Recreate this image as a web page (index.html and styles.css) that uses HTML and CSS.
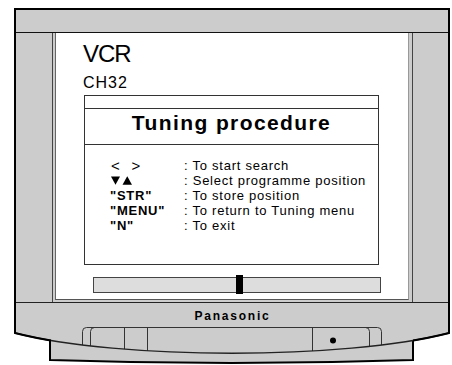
FILE: index.html
```html
<!DOCTYPE html>
<html>
<head>
<title>Tuning procedure</title>
<link rel="stylesheet" href="styles.css">
</head>
<body>

<div class="tv">
  <div class="cabinet">
    <div class="band"></div>
    <div class="front">
      <div class="frame">
        <div class="screen">
          <div class="vcr">VCR</div>
          <div class="channel">CH32</div>

          <div class="panel">
            <div class="panel-top"></div>
            <div class="title">Tuning procedure</div>
            <div class="keys">
              <div class="key plain">&lt;<span class="gt">&gt;</span></div>
              <div class="desc">: To start search</div>

              <div class="key">
                <svg class="arrows" width="24" height="9" viewBox="0 0 24 9">
                  <polygon points="1,0.5 10,0.5 5.5,8.8"/>
                  <polygon points="12.5,8.8 22,8.8 17.25,0.3"/>
                </svg>
              </div>
              <div class="desc">: Select programme position</div>

              <div class="key">"STR"</div>
              <div class="desc">: To store position</div>

              <div class="key">"MENU"</div>
              <div class="desc">: To return to Tuning menu</div>

              <div class="key">"N"</div>
              <div class="desc">: To exit</div>
            </div>
          </div>

          <div class="bar"><div class="marker"></div></div>
        </div>
      </div>
    </div>
  </div>

  <svg class="base" width="436" height="62" viewBox="14 303 436 62">
    <defs>
      <clipPath id="face">
        <path d="M15,300 L15,333 C120,360 344,360 449,333 L449,300 Z"/>
      </clipPath>
      <clipPath id="sides">
        <rect x="0" y="300" width="51" height="70"/>
        <rect x="413" y="300" width="50" height="70"/>
      </clipPath>
    </defs>

    <!-- stand under the bezel -->
    <path class="stand" d="M50,336 L50,360 Q231.5,366 413,360 L413,336 Z"/>

    <!-- bezel -->
    <path class="face" d="M15,302 L15,333 C120,360 344,360 449,333 L449,302 Z"/>

    <g clip-path="url(#face)" class="panel-lines">
      <path d="M82.5,360 L82.5,331.5 Q82.5,327.5 86.5,327.5 L377.5,327.5 Q381.5,327.5 381.5,331.5 L381.5,360"/>
      <path d="M90.5,360 L90.5,331.5 Q90.5,327.5 94.5,327.5"/>
      <path d="M369.5,360 L369.5,331.5 Q369.5,327.5 365.5,327.5"/>
      <path d="M124.5,327.5 V360 M147.5,327.5 V360 M312.5,327.5 V360"/>
    </g>

    <path class="rim" d="M15,302 L15,333 C120,360 344,360 449,333 L449,302"/>
    <path class="rim-outer" clip-path="url(#sides)" d="M15,302 L15,333 C120,360 344,360 449,333 L449,302"/>

    <text class="brand" x="232.5" y="320">Panasonic</text>
    <circle cx="333" cy="340.5" r="3"/>
  </svg>
</div>

</body>
</html>
```

FILE: styles.css
```css
body {
  margin: 0;
  background: #fff;
  font-family: "Liberation Sans", Arial, sans-serif;
  color: #000;
  overflow: hidden;
}

.tv {
  margin: 8px 0 0 14px;
  width: 436px;
}

.cabinet {
  border: 2px solid #000;
  border-bottom: 0;
  background: #cccccc;
}

.band {
  height: 22px;
  border-bottom: 1px solid #111;
}

.front {
  display: flex;
  padding: 0 35px 0 36px;
  border-bottom: 1px solid #222;
}

.frame {
  width: 361px;
  box-sizing: border-box;
  border-left: 1px solid #444;
  border-right: 1px solid #444;
  padding: 0 3px 2px 2px;
}

.screen {
  height: 267px;
  box-sizing: border-box;
  background: #fff;
  border-left: 1px solid #666;
  border-right: 1px solid #999;
  border-bottom: 1px solid #555;
  padding: 9px 0 0 27px;
}

.vcr {
  font-size: 24px;
  line-height: 24px;
  letter-spacing: -1px;
}

.channel {
  margin-top: 9px;
  font-size: 16px;
  line-height: 16px;
  letter-spacing: 1px;
}

.panel {
  margin: 4px 0 0 1px;
  width: 295px;
  height: 170px;
  box-sizing: border-box;
  border: 1px solid #333;
}

.panel-top {
  height: 13px;
  box-sizing: border-box;
  border-bottom: 1px solid #333;
}

.title {
  height: 36px;
  box-sizing: border-box;
  border-bottom: 1px solid #333;
  padding-top: 3px;
  font-size: 21px;
  line-height: 21px;
  font-weight: bold;
  letter-spacing: 1.4px;
  text-align: center;
}

.keys {
  display: grid;
  grid-template-columns: 74px auto;
  padding: 13px 0 0 25px;
  font-size: 13px;
  line-height: 15px;
  letter-spacing: 0.75px;
}

.key {
  font-weight: bold;
}

.key.plain {
  font-weight: normal;
  font-size: 15px;
  padding-left: 1px;
}

.gt {
  margin-left: 11px;
}

.arrows {
  display: block;
  margin-top: 3px;
}

.bar {
  position: relative;
  margin: 12px 0 0 10px;
  width: 288px;
  height: 16px;
  box-sizing: border-box;
  border: 1px solid #444;
  background: #dddddd;
}

.marker {
  position: absolute;
  left: 142px;
  top: -3px;
  width: 7px;
  height: 19px;
  background: #000;
}

.base {
  display: block;
}

.stand {
  fill: #cccccc;
  stroke: #000;
  stroke-width: 2;
}

.face {
  fill: #cccccc;
}

.panel-lines path {
  fill: none;
  stroke: #333;
  stroke-width: 1;
}

.rim {
  fill: none;
  stroke: #222;
  stroke-width: 1.3;
}

.rim-outer {
  fill: none;
  stroke: #000;
  stroke-width: 2;
}

.brand {
  font-family: "Liberation Sans", Arial, sans-serif;
  font-size: 12px;
  font-weight: bold;
  letter-spacing: 1.8px;
  text-anchor: middle;
}
```
